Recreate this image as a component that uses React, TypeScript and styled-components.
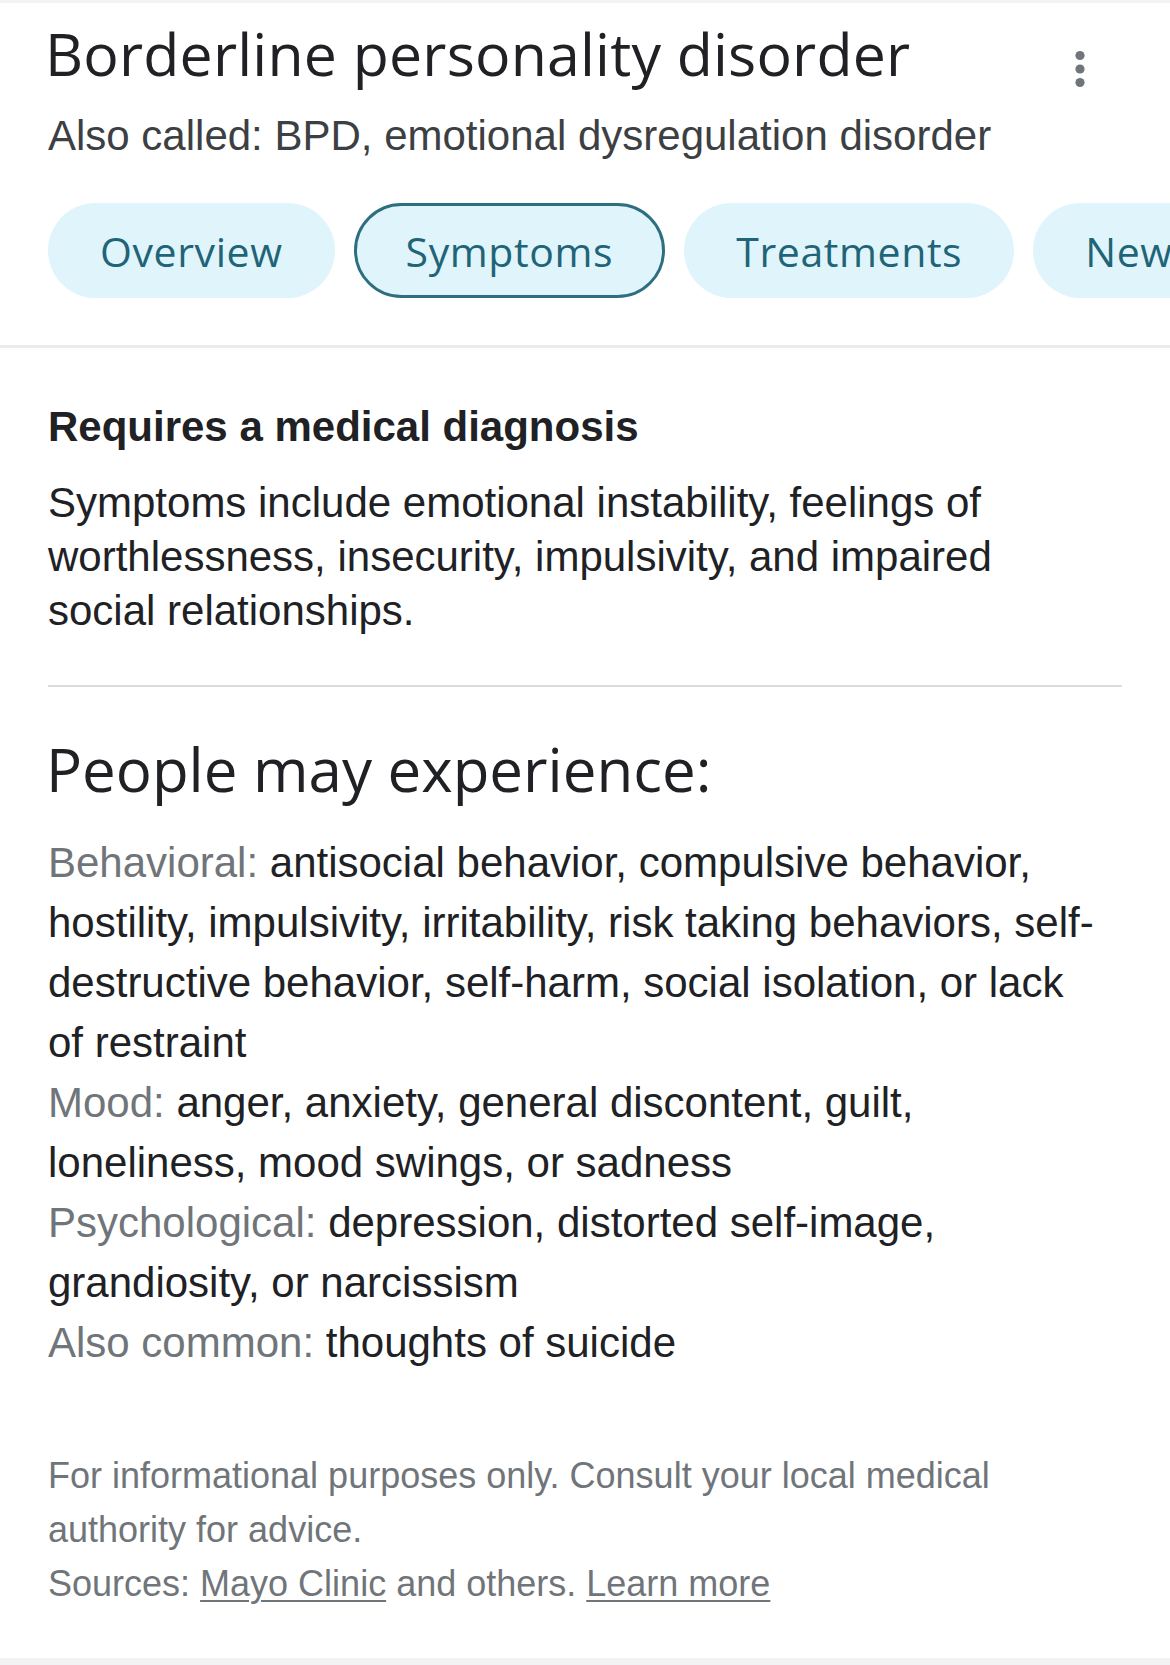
import styled, { createGlobalStyle } from "styled-components";

const GlobalStyle = createGlobalStyle`
  html, body {
    margin: 0;
    padding: 0;
    background: #ffffff;
  }
  body {
    overflow-x: hidden;
    font-family: "Liberation Sans", Arial, sans-serif;
    color: #202124;
  }
`;

const Page = styled.div`
  width: 1170px;
  min-height: 1665px;
  display: flex;
  flex-direction: column;
  overflow: hidden;
`;

const Band = styled.div<{ $h: number }>`
  height: ${(p) => p.$h}px;
  background: #f1f3f4;
  flex-shrink: 0;
`;

const Header = styled.header`
  padding: 15px 48px 0;
`;

const TitleRow = styled.div`
  display: flex;
  align-items: flex-start;
  justify-content: space-between;
`;

const Title = styled.h1`
  margin: 0 0 0 -3px;
  font-family: "Open Sans", sans-serif;
  font-size: 59px;
  font-weight: 500;
  letter-spacing: 0.2px;
  line-height: 70px;
  color: #202124;
`;

const MenuButton = styled.button`
  width: 44px;
  height: 44px;
  margin: 29px 20px 0 0;
  padding: 0;
  border: none;
  background: none;
  flex-shrink: 0;
`;

const Subtitle = styled.p`
  margin: 18px 0 0;
  font-size: 42px;
  line-height: 54px;
  color: #3c4043;
`;

const ChipRow = styled.nav`
  display: flex;
  gap: 19px;
  margin-top: 40px;
`;

const Chip = styled.div<{ $active?: boolean }>`
  flex-shrink: 0;
  box-sizing: border-box;
  height: 95px;
  padding: 0 49px;
  display: flex;
  align-items: center;
  border-radius: 48px;
  background: #dff5fb;
  border: 3px solid ${(p) => (p.$active ? "#2d6e80" : "transparent")};
  color: #1f6477;
  font-family: "Open Sans", sans-serif;
  font-size: 41px;
  font-weight: 500;
  letter-spacing: 0.6px;
  white-space: nowrap;
`;

const TopRule = styled.div`
  height: 3px;
  margin-top: 47px;
  background: #ebebeb;
`;

const Content = styled.main`
  padding: 52px 48px 0;
`;

const Notice = styled.h2`
  margin: 0;
  font-size: 42px;
  font-weight: 700;
  line-height: 54px;
  color: #202124;
`;

const Summary = styled.p`
  margin: 22px 0 0;
  max-width: 1060px;
  font-size: 42px;
  line-height: 54px;
  color: #202124;
`;

const Rule = styled.hr`
  margin: 47px 0 0;
  height: 2px;
  border: none;
  background: #dadce0;
`;

const Heading = styled.h2`
  margin: 46px 0 0 -2px;
  font-family: "Open Sans", sans-serif;
  font-size: 60px;
  font-weight: 500;
  line-height: 72px;
  color: #202124;
`;

const SymptomList = styled.div`
  margin-top: 28px;
  max-width: 1060px;
`;

const SymptomRow = styled.p`
  margin: 0;
  font-size: 42px;
  line-height: 60px;
  color: #202124;
`;

const Label = styled.span`
  color: #70757a;
`;

const Footer = styled.footer`
  margin-top: 76px;
  max-width: 1060px;
  font-size: 36px;
  line-height: 54px;
  color: #70757a;
`;

const FooterLine = styled.p`
  margin: 0;
`;

const Link = styled.a`
  color: inherit;
  text-decoration: underline;
  text-decoration-thickness: 2px;
  text-underline-offset: 4px;
`;

const Spacer = styled.div`
  flex: 1;
`;

const tabs = ["Overview", "Symptoms", "Treatments", "News"];

const symptoms = [
  {
    label: "Behavioral:",
    text: "antisocial behavior, compulsive behavior, hostility, impulsivity, irritability, risk taking behaviors, self-destructive behavior, self-harm, social isolation, or lack of restraint",
  },
  {
    label: "Mood:",
    text: "anger, anxiety, general discontent, guilt, loneliness, mood swings, or sadness",
  },
  {
    label: "Psychological:",
    text: "depression, distorted self-image, grandiosity, or narcissism",
  },
  { label: "Also common:", text: "thoughts of suicide" },
];

function MoreIcon() {
  return (
    <svg width="44" height="44" viewBox="0 0 44 44" fill="#70757a">
      <circle cx="22" cy="8.5" r="4.6" />
      <circle cx="22" cy="22" r="4.6" />
      <circle cx="22" cy="35.5" r="4.6" />
    </svg>
  );
}

function App() {
  return (
    <Page>
      <GlobalStyle />
      <Band $h={3} />
      <Header>
        <TitleRow>
          <Title>Borderline personality disorder</Title>
          <MenuButton aria-label="More options">
            <MoreIcon />
          </MenuButton>
        </TitleRow>
        <Subtitle>Also called: BPD, emotional dysregulation disorder</Subtitle>
        <ChipRow>
          {tabs.map((tab) => (
            <Chip key={tab} $active={tab === "Symptoms"}>
              {tab}
            </Chip>
          ))}
        </ChipRow>
      </Header>
      <TopRule />
      <Content>
        <Notice>Requires a medical diagnosis</Notice>
        <Summary>
          Symptoms include emotional instability, feelings of worthlessness,
          insecurity, impulsivity, and impaired social relationships.
        </Summary>
        <Rule />
        <Heading>People may experience:</Heading>
        <SymptomList>
          {symptoms.map((s) => (
            <SymptomRow key={s.label}>
              <Label>{s.label}</Label> {s.text}
            </SymptomRow>
          ))}
        </SymptomList>
        <Footer>
          <FooterLine>
            For informational purposes only. Consult your local medical
            authority for advice.
          </FooterLine>
          <FooterLine>
            Sources: <Link href="#">Mayo Clinic</Link> and others.{" "}
            <Link href="#">Learn more</Link>
          </FooterLine>
        </Footer>
      </Content>
      <Spacer />
      <Band $h={7} />
    </Page>
  );
}

export default App;
